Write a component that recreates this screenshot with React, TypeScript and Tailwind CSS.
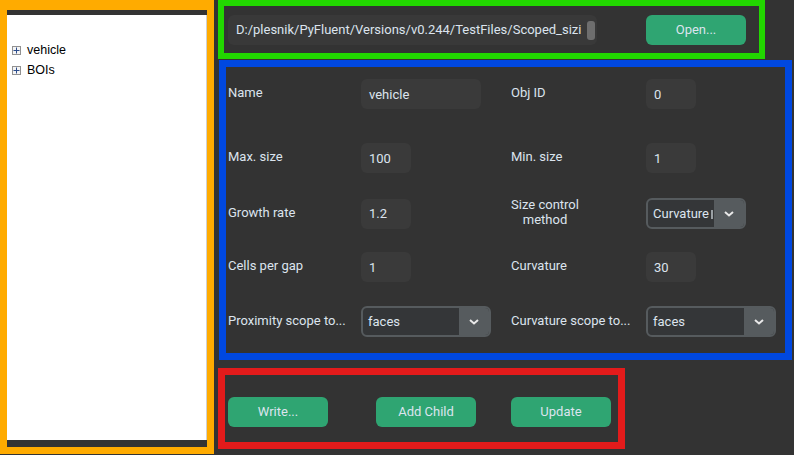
import { ReactNode } from "react"

const font = { fontFamily: "Roboto, 'Noto Sans', sans-serif" }

function Field({ value, wide }: { value: string; wide?: boolean }) {
    return (
        <div
            className={
                "h-[30px] rounded-[6px] bg-[#3a3a3a] flex items-center pl-[8px] pt-[1px] text-[13px] text-[#dce4ee] " +
                (wide ? "w-[120px]" : "w-[50px]")
            }
        >
            {value}
        </div>
    )
}

function Chevron() {
    return (
        <svg width="10" height="6" viewBox="0 0 10 6">
            <path d="M1 1 L5 4.5 L9 1" stroke="#e8e8e8" strokeWidth="2" fill="none" />
        </svg>
    )
}

function Combo({ value, width, stub }: { value: string; width: string; stub?: boolean }) {
    return (
        <div className={"h-[31px] rounded-[6px] border-2 border-[#565b5e] bg-[#343638] flex overflow-hidden " + width}>
            <div className="flex-1 min-w-0 flex items-center pl-[5px] text-[13px] text-[#dce4ee] whitespace-nowrap">
                <span>{value}</span>
                {stub && <div className="w-[2px] h-[9px] bg-[#9aa0a4] ml-[2px] mt-[2px]" />}
            </div>
            <div className="w-[30px] bg-[#565b5e] flex items-center justify-center">
                <Chevron />
            </div>
        </div>
    )
}

function Label({ children }: { children: ReactNode }) {
    return <div className="text-[13px] text-[#dce4ee] leading-[15px] pb-[3px]">{children}</div>
}

function Row({ children, className }: { children: ReactNode; className: string }) {
    return <div className={"grid grid-cols-[133px_150px_135px_1fr] items-center h-[30px] " + className}>{children}</div>
}

function Button({ text }: { text: string }) {
    return (
        <div className="w-[100px] h-[30px] rounded-[6px] bg-[#2fa572] flex items-center justify-center text-[13px] text-[#dce4ee]">
            {text}
        </div>
    )
}

function TreeItem({ text }: { text: string }) {
    return (
        <div className="h-[20px] flex items-center gap-[6px]">
            <div className="w-[9px] h-[9px] border border-[#919191] bg-[#f4f4f4] flex items-center justify-center">
                <svg width="7" height="7" viewBox="0 0 7 7">
                    <path d="M0.5 3.5 H6.5 M3.5 0.5 V6.5" stroke="#2b4c8c" strokeWidth="1" />
                </svg>
            </div>
            <span className="text-[12.5px] text-black" style={{ fontFamily: "'Liberation Sans', Arial, sans-serif" }}>
                {text}
            </span>
        </div>
    )
}

export default function App() {
    return (
        <div className="flex w-[794px] h-[455px] bg-[#333333] overflow-hidden" style={font}>
            <div className="w-[214px] h-[454px] border-[7px] border-t-[10px] border-r-[7px] border-[#ffab00] bg-white flex flex-col shrink-0">
                <div className="h-[5px] bg-[#333333]" />
                <div className="flex-1 pt-[25px] pl-[5px] border-r border-[#d0d0d0]">
                    <TreeItem text="vehicle" />
                    <TreeItem text="BOIs" />
                </div>
                <div className="h-[7px] bg-[#333333]" />
            </div>

            <div className="flex flex-col pl-[4px]">
                <div className="w-[547px] h-[59px] border-[6px] border-[#22d700] flex items-start pt-[9px] pl-[4px]">
                    <div className="w-[369px] h-[30px] rounded-[6px] bg-[#393939] flex items-center pl-[8px] pr-[2px]">
                        <span className="flex-1 text-[13px] text-[#dce4ee] whitespace-nowrap">
                            D:/plesnik/PyFluent/Versions/v0.244/TestFiles/Scoped_sizi
                        </span>
                        <div className="w-[8px] h-[19px] rounded-[3px] bg-[#6e6e6e] ml-[3px]" />
                    </div>
                    <div className="ml-[49px]">
                        <Button text="Open..." />
                    </div>
                </div>

                <div className="ml-[1px] mt-[1px] w-[573px] h-[300px] border-[7px] border-[#0048e0] pl-[2px]">
                    <Row className="mt-[12px]">
                        <Label>Name</Label>
                        <Field value="vehicle" wide />
                        <Label>Obj ID</Label>
                        <Field value="0" />
                    </Row>
                    <Row className="mt-[34px]">
                        <Label>Max. size</Label>
                        <Field value="100" />
                        <Label>Min. size</Label>
                        <Field value="1" />
                    </Row>
                    <Row className="mt-[24px]">
                        <Label>Growth rate</Label>
                        <Field value="1.2" />
                        <div className="w-[68px] text-center">
                            <Label>
                                Size control
                                <br />
                                method
                            </Label>
                        </div>
                        <Combo width="w-[100px]" value="Curvature" stub />
                    </Row>
                    <Row className="mt-[25px]">
                        <Label>Cells per gap</Label>
                        <Field value="1" />
                        <Label>Curvature</Label>
                        <Field value="30" />
                    </Row>
                    <Row className="mt-[24px]">
                        <Label>Proximity scope to...</Label>
                        <Combo width="w-[130px]" value="faces" />
                        <Label>Curvature scope to...</Label>
                        <Combo width="w-[130px]" value="faces" />
                    </Row>
                </div>

                <div className="mt-[8px] w-[407px] h-[81px] border-[7px] border-[#e31b1b] flex items-start pt-[22px] pl-[3px]">
                    <Button text="Write..." />
                    <div className="ml-[48px]">
                        <Button text="Add Child" />
                    </div>
                    <div className="ml-[35px]">
                        <Button text="Update" />
                    </div>
                </div>
            </div>
        </div>
    )
}
